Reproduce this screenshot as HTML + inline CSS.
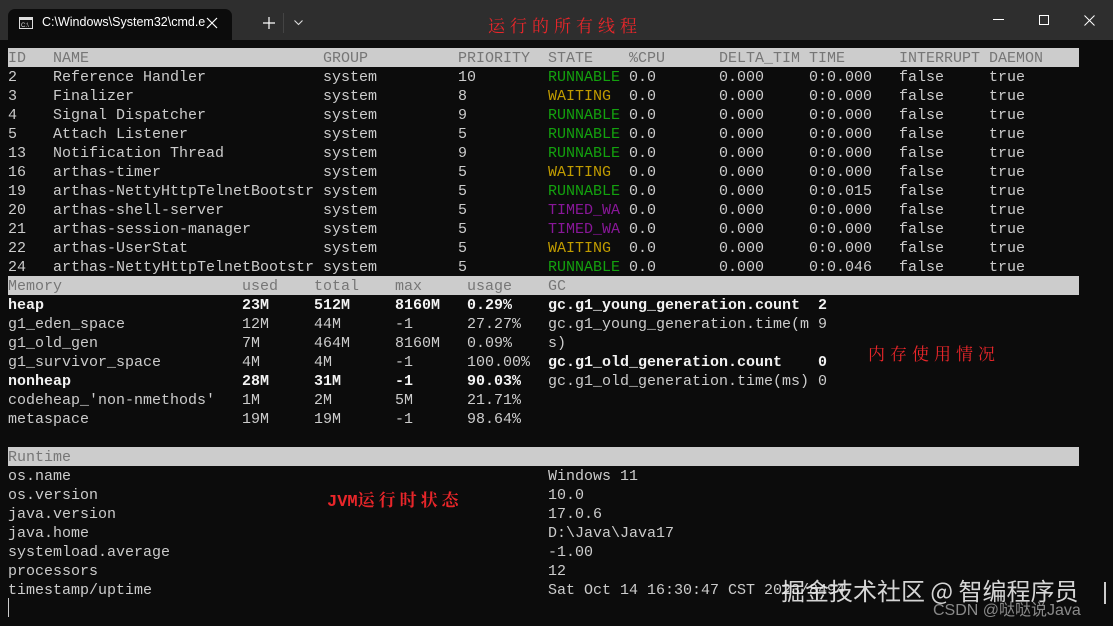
<!DOCTYPE html>
<html><head><meta charset="utf-8"><style>
*{margin:0;padding:0;box-sizing:border-box}
body{width:1113px;height:626px;background:#0c0c0c;overflow:hidden;position:relative;font-family:"Liberation Mono",monospace;font-size:15px;color:#cccccc}
.tb{position:absolute;left:0;top:0;width:1113px;height:40px;background:#2e2e2e}
.tab{position:absolute;left:8px;top:9px;width:224px;height:31px;background:#0c0c0c;border-radius:7px 7px 0 0}
.r{position:absolute;left:8px;height:19px;line-height:21px;white-space:pre}
.r span{display:inline-block;white-space:pre;overflow:hidden;vertical-align:top}
.bar{width:1071px;background:#cccccc;color:#767676}
.g{color:#13a10e}.y{color:#c19c00}.p{color:#881798}
.b{color:#f2f2f2;font-weight:bold}
.ann{position:absolute;color:#e8262a;font-family:"Noto Serif CJK SC","WenQuanYi Zen Hei",serif;font-size:17px;letter-spacing:5px;white-space:nowrap}
</style></head><body>
<div class="tb"></div>
<div class="tab"></div>
<svg style="position:absolute;left:19px;top:17px" width="14" height="12" viewBox="0 0 14 12"><rect x="0.5" y="0.5" width="13" height="11" fill="#111" stroke="#ddd"/><rect x="1" y="1" width="12" height="2" fill="#ddd"/><text x="2" y="10" font-size="6" fill="#ddd" font-family="Liberation Sans">C:\</text></svg>
<div style="position:absolute;left:42px;top:15px;font-family:'Liberation Sans',sans-serif;font-size:12.5px;color:#fff">C:\Windows\System32\cmd.e</div>
<svg style="position:absolute;left:206px;top:17px" width="12" height="12"><path d="M1 1L11 11M11 1L1 11" stroke="#fff" stroke-width="1.2"/></svg>
<svg style="position:absolute;left:263px;top:17px" width="12" height="12"><path d="M6 0V12M0 6H12" stroke="#fff" stroke-width="1.2"/></svg>
<div style="position:absolute;left:283px;top:13px;width:1px;height:20px;background:#444"></div>
<svg style="position:absolute;left:294px;top:20px" width="9" height="6"><path d="M0.5 0.5L4.5 4.5L8.5 0.5" stroke="#ddd" fill="none" stroke-width="1.1"/></svg>
<div style="position:absolute;left:993px;top:19px;width:11px;height:1px;background:#fff"></div>
<div style="position:absolute;left:1039px;top:15px;width:10px;height:10px;border:1px solid #fff"></div>
<svg style="position:absolute;left:1084px;top:15px" width="11" height="11"><path d="M0.5 0.5L10.5 10.5M10.5 0.5L0.5 10.5" stroke="#fff" stroke-width="1"/></svg>
<div class="ann" style="left:488px;top:12px">运行的所有线程</div>

<div class="r bar" style="top:48px"><span style="width:45px">ID</span><span style="width:270px">NAME</span><span style="width:135px">GROUP</span><span style="width:90px">PRIORITY</span><span style="width:81px">STATE</span><span style="width:90px">%CPU</span><span style="width:90px">DELTA_TIM</span><span style="width:90px">TIME</span><span style="width:90px">INTERRUPT</span><span>DAEMON</span></div>
<div class="r" style="top:67px"><span style="width:45px">2</span><span style="width:270px">Reference Handler</span><span style="width:135px">system</span><span style="width:90px">10</span><span style="width:81px" class="g">RUNNABLE</span><span style="width:90px">0.0</span><span style="width:90px">0.000</span><span style="width:90px">0:0.000</span><span style="width:90px">false</span><span>true</span></div>
<div class="r" style="top:86px"><span style="width:45px">3</span><span style="width:270px">Finalizer</span><span style="width:135px">system</span><span style="width:90px">8</span><span style="width:81px" class="y">WAITING</span><span style="width:90px">0.0</span><span style="width:90px">0.000</span><span style="width:90px">0:0.000</span><span style="width:90px">false</span><span>true</span></div>
<div class="r" style="top:105px"><span style="width:45px">4</span><span style="width:270px">Signal Dispatcher</span><span style="width:135px">system</span><span style="width:90px">9</span><span style="width:81px" class="g">RUNNABLE</span><span style="width:90px">0.0</span><span style="width:90px">0.000</span><span style="width:90px">0:0.000</span><span style="width:90px">false</span><span>true</span></div>
<div class="r" style="top:124px"><span style="width:45px">5</span><span style="width:270px">Attach Listener</span><span style="width:135px">system</span><span style="width:90px">5</span><span style="width:81px" class="g">RUNNABLE</span><span style="width:90px">0.0</span><span style="width:90px">0.000</span><span style="width:90px">0:0.000</span><span style="width:90px">false</span><span>true</span></div>
<div class="r" style="top:143px"><span style="width:45px">13</span><span style="width:270px">Notification Thread</span><span style="width:135px">system</span><span style="width:90px">9</span><span style="width:81px" class="g">RUNNABLE</span><span style="width:90px">0.0</span><span style="width:90px">0.000</span><span style="width:90px">0:0.000</span><span style="width:90px">false</span><span>true</span></div>
<div class="r" style="top:162px"><span style="width:45px">16</span><span style="width:270px">arthas-timer</span><span style="width:135px">system</span><span style="width:90px">5</span><span style="width:81px" class="y">WAITING</span><span style="width:90px">0.0</span><span style="width:90px">0.000</span><span style="width:90px">0:0.000</span><span style="width:90px">false</span><span>true</span></div>
<div class="r" style="top:181px"><span style="width:45px">19</span><span style="width:270px">arthas-NettyHttpTelnetBootstr</span><span style="width:135px">system</span><span style="width:90px">5</span><span style="width:81px" class="g">RUNNABLE</span><span style="width:90px">0.0</span><span style="width:90px">0.000</span><span style="width:90px">0:0.015</span><span style="width:90px">false</span><span>true</span></div>
<div class="r" style="top:200px"><span style="width:45px">20</span><span style="width:270px">arthas-shell-server</span><span style="width:135px">system</span><span style="width:90px">5</span><span style="width:81px" class="p">TIMED_WA</span><span style="width:90px">0.0</span><span style="width:90px">0.000</span><span style="width:90px">0:0.000</span><span style="width:90px">false</span><span>true</span></div>
<div class="r" style="top:219px"><span style="width:45px">21</span><span style="width:270px">arthas-session-manager</span><span style="width:135px">system</span><span style="width:90px">5</span><span style="width:81px" class="p">TIMED_WA</span><span style="width:90px">0.0</span><span style="width:90px">0.000</span><span style="width:90px">0:0.000</span><span style="width:90px">false</span><span>true</span></div>
<div class="r" style="top:238px"><span style="width:45px">22</span><span style="width:270px">arthas-UserStat</span><span style="width:135px">system</span><span style="width:90px">5</span><span style="width:81px" class="y">WAITING</span><span style="width:90px">0.0</span><span style="width:90px">0.000</span><span style="width:90px">0:0.000</span><span style="width:90px">false</span><span>true</span></div>
<div class="r" style="top:257px"><span style="width:45px">24</span><span style="width:270px">arthas-NettyHttpTelnetBootstr</span><span style="width:135px">system</span><span style="width:90px">5</span><span style="width:81px" class="g">RUNNABLE</span><span style="width:90px">0.0</span><span style="width:90px">0.000</span><span style="width:90px">0:0.046</span><span style="width:90px">false</span><span>true</span></div>

<div class="r bar" style="top:276px"><span style="width:234px">Memory</span><span style="width:72px">used</span><span style="width:81px">total</span><span style="width:72px">max</span><span style="width:81px">usage</span><span>GC</span></div>
<div class="r b" style="top:295px"><span style="width:234px">heap</span><span style="width:72px">23M</span><span style="width:81px">512M</span><span style="width:72px">8160M</span><span style="width:81px">0.29%</span><span style="width:270px">gc.g1_young_generation.count</span><span>2</span></div>
<div class="r" style="top:314px"><span style="width:234px">g1_eden_space</span><span style="width:72px">12M</span><span style="width:81px">44M</span><span style="width:72px">-1</span><span style="width:81px">27.27%</span><span style="width:270px">gc.g1_young_generation.time(m</span><span>9</span></div>
<div class="r" style="top:333px"><span style="width:234px">g1_old_gen</span><span style="width:72px">7M</span><span style="width:81px">464M</span><span style="width:72px">8160M</span><span style="width:81px">0.09%</span><span>s)</span></div>
<div class="r" style="top:352px"><span style="width:234px">g1_survivor_space</span><span style="width:72px">4M</span><span style="width:81px">4M</span><span style="width:72px">-1</span><span style="width:81px">100.00%</span><span style="width:270px" class="b">gc.g1_old_generation.count</span><span class="b">0</span></div>
<div class="r b" style="top:371px"><span style="width:234px">nonheap</span><span style="width:72px">28M</span><span style="width:81px">31M</span><span style="width:72px">-1</span><span style="width:81px">90.03%</span><span style="width:270px;color:#ccc;font-weight:normal">gc.g1_old_generation.time(ms)</span><span style="color:#ccc;font-weight:normal">0</span></div>
<div class="r" style="top:390px"><span style="width:234px">codeheap_'non-nmethods'</span><span style="width:72px">1M</span><span style="width:81px">2M</span><span style="width:72px">5M</span><span style="width:81px">21.71%</span></div>
<div class="r" style="top:409px"><span style="width:234px">metaspace</span><span style="width:72px">19M</span><span style="width:81px">19M</span><span style="width:72px">-1</span><span style="width:81px">98.64%</span></div>
<div class="ann" style="left:868px;top:340px">内存使用情况</div>

<div class="r bar" style="top:447px">Runtime</div>
<div class="r" style="top:466px"><span style="width:540px">os.name</span><span>Windows 11</span></div>
<div class="r" style="top:485px"><span style="width:540px">os.version</span><span>10.0</span></div>
<div class="r" style="top:504px"><span style="width:540px">java.version</span><span>17.0.6</span></div>
<div class="r" style="top:523px"><span style="width:540px">java.home</span><span>D:\Java\Java17</span></div>
<div class="r" style="top:542px"><span style="width:540px">systemload.average</span><span>-1.00</span></div>
<div class="r" style="top:561px"><span style="width:540px">processors</span><span>12</span></div>
<div class="r" style="top:580px"><span style="width:540px">timestamp/uptime</span><span>Sat Oct 14 16:30:47 CST 2023/8494</span></div>
<div class="ann" style="left:327px;top:486px;font-weight:bold;letter-spacing:4px"><span style="font-family:'Liberation Mono',monospace;letter-spacing:0">JVM</span>运行时状态</div>
<div style="position:absolute;left:8px;top:598px;width:1px;height:19px;background:#ccc"></div>

<div style="position:absolute;left:781px;top:575px;font-family:'Noto Sans CJK SC',sans-serif;font-size:24px;color:rgba(235,235,235,0.9);white-space:nowrap;line-height:30px">掘金技术社区 @ 智编程序员</div>
<div style="position:absolute;left:1104px;top:582px;width:2px;height:22px;background:#ccc"></div>
<div style="position:absolute;left:933px;top:596px;font-family:'Liberation Sans','Noto Sans CJK SC',sans-serif;font-size:16px;color:rgba(160,160,160,0.85);white-space:nowrap">CSDN @哒哒说Java</div>
</body></html>
